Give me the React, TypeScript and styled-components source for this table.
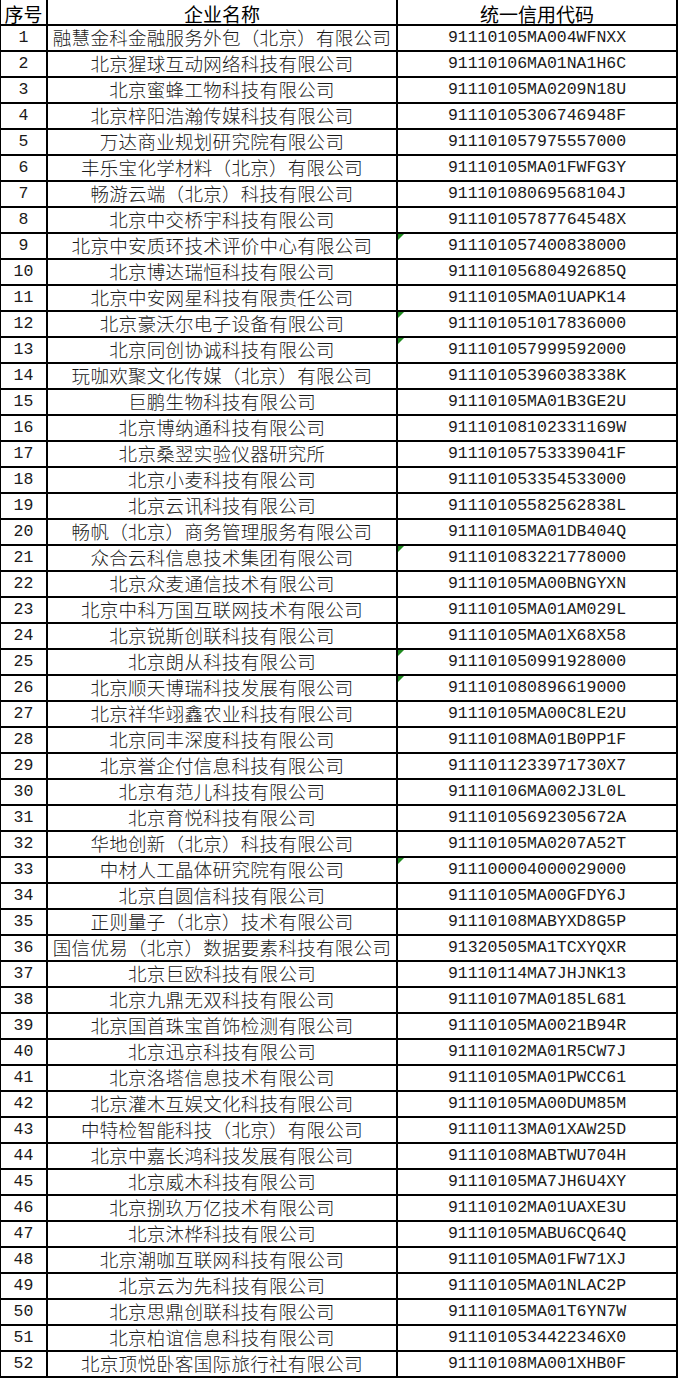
import { FC } from "react";
import styled, { createGlobalStyle } from "styled-components";

type Company = {
  name: string;
  code: string;
  flag?: boolean; // Excel "number stored as text" marker
};

const companies: Company[] = [
  { name: "融慧金科金融服务外包（北京）有限公司", code: "91110105MA004WFNXX" },
  { name: "北京猩球互动网络科技有限公司", code: "91110106MA01NA1H6C" },
  { name: "北京蜜蜂工物科技有限公司", code: "91110105MA0209N18U" },
  { name: "北京梓阳浩瀚传媒科技有限公司", code: "91110105306746948F" },
  { name: "万达商业规划研究院有限公司", code: "911101057975557000" },
  { name: "丰乐宝化学材料（北京）有限公司", code: "91110105MA01FWFG3Y" },
  { name: "畅游云端（北京）科技有限公司", code: "91110108069568104J" },
  { name: "北京中交桥宇科技有限公司", code: "91110105787764548X" },
  { name: "北京中安质环技术评价中心有限公司", code: "911101057400838000", flag: true },
  { name: "北京博达瑞恒科技有限公司", code: "91110105680492685Q" },
  { name: "北京中安网星科技有限责任公司", code: "91110105MA01UAPK14" },
  { name: "北京豪沃尔电子设备有限公司", code: "911101051017836000", flag: true },
  { name: "北京同创协诚科技有限公司", code: "911101057999592000", flag: true },
  { name: "玩咖欢聚文化传媒（北京）有限公司", code: "91110105396038338K" },
  { name: "巨鹏生物科技有限公司", code: "91110105MA01B3GE2U" },
  { name: "北京博纳通科技有限公司", code: "91110108102331169W" },
  { name: "北京桑翌实验仪器研究所", code: "91110105753339041F" },
  { name: "北京小麦科技有限公司", code: "911101053354533000" },
  { name: "北京云讯科技有限公司", code: "91110105582562838L" },
  { name: "畅帆（北京）商务管理服务有限公司", code: "91110105MA01DB404Q" },
  { name: "众合云科信息技术集团有限公司", code: "911101083221778000", flag: true },
  { name: "北京众麦通信技术有限公司", code: "91110105MA00BNGYXN" },
  { name: "北京中科万国互联网技术有限公司", code: "91110105MA01AM029L" },
  { name: "北京锐斯创联科技有限公司", code: "91110105MA01X68X58" },
  { name: "北京朗从科技有限公司", code: "911101050991928000", flag: true },
  { name: "北京顺天博瑞科技发展有限公司", code: "911101080896619000", flag: true },
  { name: "北京祥华翊鑫农业科技有限公司", code: "91110105MA00C8LE2U" },
  { name: "北京同丰深度科技有限公司", code: "91110108MA01B0PP1F" },
  { name: "北京誉企付信息科技有限公司", code: "9111011233971730X7" },
  { name: "北京有范儿科技有限公司", code: "91110106MA002J3L0L" },
  { name: "北京育悦科技有限公司", code: "91110105692305672A" },
  { name: "华地创新（北京）科技有限公司", code: "91110105MA0207A52T" },
  { name: "中材人工晶体研究院有限公司", code: "911100004000029000", flag: true },
  { name: "北京自圆信科技有限公司", code: "91110105MA00GFDY6J" },
  { name: "正则量子（北京）技术有限公司", code: "91110108MABYXD8G5P" },
  { name: "国信优易（北京）数据要素科技有限公司", code: "91320505MA1TCXYQXR" },
  { name: "北京巨欧科技有限公司", code: "91110114MA7JHJNK13" },
  { name: "北京九鼎无双科技有限公司", code: "91110107MA0185L681" },
  { name: "北京国首珠宝首饰检测有限公司", code: "91110105MA0021B94R" },
  { name: "北京迅京科技有限公司", code: "91110102MA01R5CW7J" },
  { name: "北京洛塔信息技术有限公司", code: "91110105MA01PWCC61" },
  { name: "北京灌木互娱文化科技有限公司", code: "91110105MA00DUM85M" },
  { name: "中特检智能科技（北京）有限公司", code: "91110113MA01XAW25D" },
  { name: "北京中嘉长鸿科技发展有限公司", code: "91110108MABTWU704H" },
  { name: "北京威木科技有限公司", code: "91110105MA7JH6U4XY" },
  { name: "北京捌玖万亿技术有限公司", code: "91110102MA01UAXE3U" },
  { name: "北京沐桦科技有限公司", code: "91110105MABU6CQ64Q" },
  { name: "北京潮咖互联网科技有限公司", code: "91110105MA01FW71XJ" },
  { name: "北京云为先科技有限公司", code: "91110105MA01NLAC2P" },
  { name: "北京思鼎创联科技有限公司", code: "91110105MA01T6YN7W" },
  { name: "北京柏谊信息科技有限公司", code: "9111010534422346X0" },
  { name: "北京顶悦卧客国际旅行社有限公司", code: "91110108MA001XHB0F" },
];

const App: FC = () => {
  return (
    <>
      <GlobalStyle />
      <Sheet>
        <HeadCell>序号</HeadCell>
        <HeadCell>企业名称</HeadCell>
        <HeadCell>统一信用代码</HeadCell>
        {companies.map((c, i) => (
          <Row key={c.code}>
            <NumCell>{i + 1}</NumCell>
            <NameCell>{c.name}</NameCell>
            <NumCell $flag={c.flag}>{c.code}</NumCell>
          </Row>
        ))}
      </Sheet>
    </>
  );
};

export default App;

const GlobalStyle = createGlobalStyle`
  html, body {
    margin: 0;
    padding: 0;
    background: #ffffff;
  }
`;

const Sheet = styled.div`
  display: grid;
  grid-template-columns: 47px 350px 280px;
  grid-auto-rows: 26px;
  width: 677px;
  border-left: 1px solid #000000;
  color: #1a1a1a;
`;

const Row = styled.div`
  display: contents;
`;

const Cell = styled.div`
  position: relative;
  display: flex;
  align-items: center;
  justify-content: center;
  box-sizing: border-box;
  border-right: 2px solid #000000;
  border-bottom: 2px solid #000000;
  line-height: 20px;
  white-space: nowrap;
`;

const HeadCell = styled(Cell)`
  padding-top: 3px;
  font-family: "Noto Sans CJK SC", "Noto Sans", sans-serif;
  font-size: 19px;
  color: #000000;
`;

const NameCell = styled(Cell)`
  padding-bottom: 2px;
  font-family: "Noto Sans CJK SC", "Noto Sans", sans-serif;
  font-size: 18.5px;
  font-weight: 300;
  letter-spacing: 0.3px;
`;

const NumCell = styled(Cell)<{ $flag?: boolean }>`
  font-family: "Liberation Mono", "DejaVu Sans Mono", monospace;
  font-size: 16.5px;

  &::before {
    content: "";
    display: ${(p) => (p.$flag ? "block" : "none")};
    position: absolute;
    top: 0;
    left: 0;
    border-top: 6px solid #1f8a1f;
    border-right: 6px solid transparent;
  }
`;
